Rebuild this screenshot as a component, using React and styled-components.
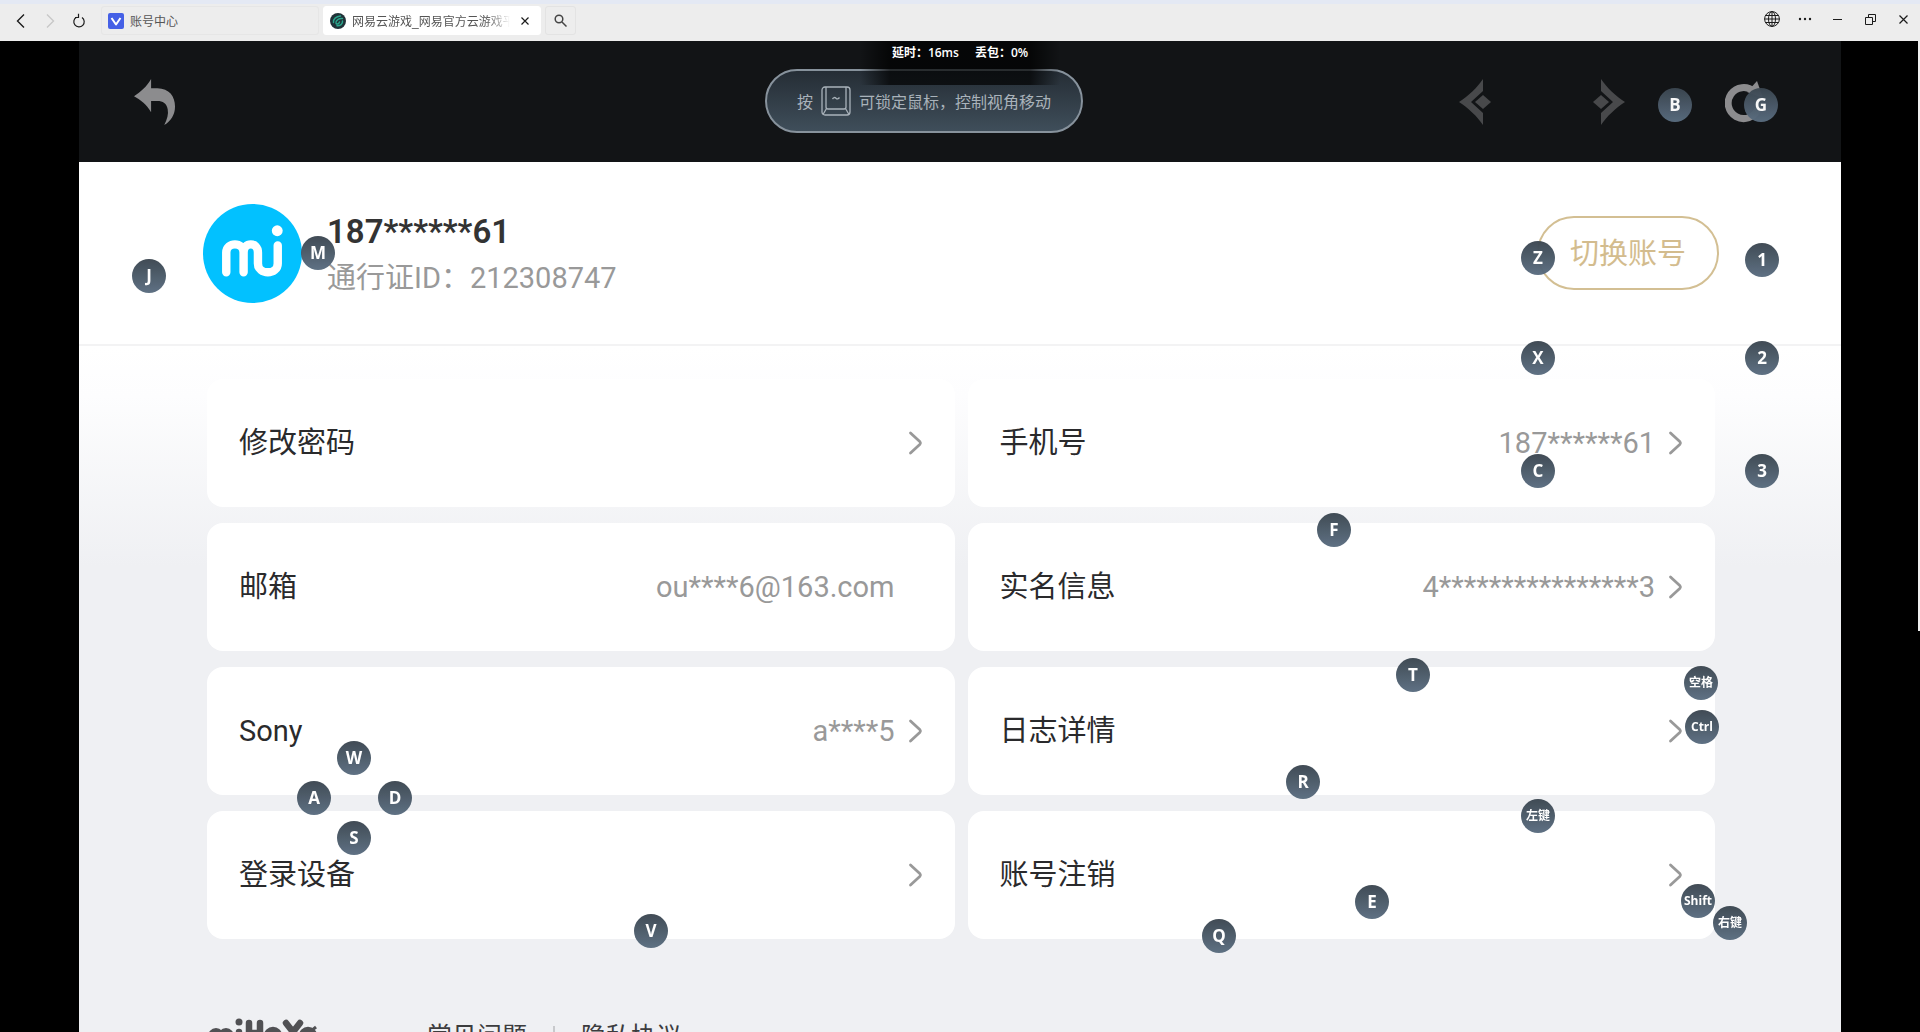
import React from "react";
import styled, { createGlobalStyle } from "styled-components";

const GlobalStyle = createGlobalStyle`
  * {
    box-sizing: border-box;
  }
  body {
    margin: 0;
    background: #000;
    font-family: Roboto, "Noto Sans CJK SC", sans-serif;
  }
  button {
    font-family: inherit;
    padding: 0;
    border: none;
    background: none;
    cursor: pointer;
  }
`;

const Window = styled.div`
  position: relative;
  display: flex;
  flex-direction: column;
  height: 100vh;
  overflow: hidden;
`;

/* Browser chrome */
const TitleBar = styled.header`
  display: flex;
  align-items: center;
  flex: none;
  height: 41px;
  padding: 0 0 4px 9px;
  background: #ededed;
  border-top: 4px solid #e4e9f4;
`;
const NavButtons = styled.nav`
  display: flex;
  gap: 6px;
  margin-right: 11px;
`;
const ChromeButton = styled.button`
  display: flex;
  align-items: center;
  justify-content: center;
  width: ${(props) => props.$width || 23}px;
  height: 24px;
  color: ${(props) => (props.$muted ? "#c8c8c8" : "#1c1c1c")};
`;
const Tab = styled.div`
  display: flex;
  align-items: center;
  width: 218px;
  height: 29px;
  margin-right: 4px;
  padding: 0 6px;
  gap: 6px;
  border: 1px solid ${(props) => (props.$active ? "#fff" : "#e6e6e6")};
  border-radius: 3px;
  background: ${(props) => (props.$active ? "#fff" : "#ededed")};
`;
const TabTitle = styled.span`
  flex: 1;
  overflow: hidden;
  white-space: nowrap;
  font-family: "Liberation Sans", "Noto Sans CJK SC", sans-serif;
  font-size: 12px;
  color: #555;
  mask-image: ${(props) => (props.$fade ? "linear-gradient(90deg, #000 85%, transparent)" : "none")};
`;
const SearchTab = styled.button`
  display: flex;
  align-items: center;
  justify-content: center;
  width: 31px;
  height: 29px;
  border: 1px solid #e3e3e3;
  border-radius: 3px;
`;
const WindowButtons = styled.div`
  display: flex;
  margin-left: auto;
  padding-bottom: 3px;
`;

/* Streamed game page */
const Stage = styled.main`
  display: flex;
  flex-direction: column;
  flex: 1;
  min-height: 0;
  margin: 0 79px;
  overflow: hidden;
  background: #eff0f3;
`;
const Toolbar = styled.div`
  display: flex;
  align-items: center;
  flex: none;
  height: 121px;
  padding: 0 76px 0 55px;
  background: #121416;
`;
const ToolbarButtons = styled.div`
  display: flex;
  align-items: center;
  margin-left: auto;
`;
const ToolbarButton = styled.button`
  display: flex;
  margin-right: ${(props) => props.$gap || 0}px;
`;
const Profile = styled.section`
  display: flex;
  align-items: center;
  flex: none;
  height: 184px;
  padding: 0 122px 0 124px;
  background: #fff;
  border-bottom: 2px solid #f3f3f4;
`;
const ProfileText = styled.div`
  display: flex;
  flex-direction: column;
  margin-left: 25px;
  padding-top: 4px;
`;
const UserName = styled.h1`
  margin: 0;
  font-size: 33px;
  line-height: 46px;
  font-weight: 600;
  color: #333;
`;
const PassportId = styled.span`
  font-size: 29px;
  line-height: 46px;
  color: #999;
`;
const SwitchButton = styled.button`
  && {
    width: 182px;
    height: 74px;
    margin-left: auto;
    padding-bottom: 4px;
    border: 2px solid #d3bf93;
    border-radius: 37px;
    font-size: 29px;
    color: #d3bc8e;
  }
`;
const Settings = styled.section`
  flex: 1;
  padding: 33px 126px 0 128px;
  background: linear-gradient(#fff 0, #fdfdfe 50px, #eff0f3 220px);
`;
const CardGrid = styled.div`
  display: grid;
  grid-template-columns: 1fr 1fr;
  gap: 16px 13px;
`;
const Card = styled.button`
  && {
    display: flex;
    align-items: center;
    height: 128px;
    padding: 0 32px;
    border-radius: 16px;
    background: #fff;
    text-align: left;
    font-size: 29px;
    line-height: 40px;
  }
`;
const CardLabel = styled.span`
  flex: 1;
  color: #2a2a2c;
`;
const CardValue = styled.span`
  margin-right: ${(props) => (props.$plain ? 28 : 13)}px;
  color: #999;
`;
const Footer = styled.footer`
  display: flex;
  align-items: flex-start;
  padding-top: 79px;
`;
const FooterLinks = styled.div`
  display: flex;
  align-items: center;
  margin-left: 109px;
`;
const FooterLink = styled.a`
  font-size: 25px;
  line-height: 38px;
  color: #3c3c3e;
  text-decoration: none;
`;
const Divider = styled.span`
  width: 2px;
  height: 22px;
  margin: 0 26px;
  background: #c8c9cc;
`;

/* Things floating over the stream */
const KeyBadge = styled.span`
  position: absolute;
  left: ${(props) => props.$x}px;
  top: ${(props) => props.$y}px;
  transform: translate(-50%, -50%);
  display: flex;
  align-items: center;
  justify-content: center;
  width: 34px;
  height: 34px;
  border-radius: 50%;
  background: linear-gradient(#3b4650, #5a6d80);
  opacity: 0.97;
  color: #fff;
  font-family: "Open Sans", "Noto Sans CJK SC", sans-serif;
  font-size: ${(props) => (props.$small ? 12 : 17)}px;
  line-height: 34px;
  font-weight: 700;
  white-space: nowrap;
`;
const LockHint = styled.div`
  position: absolute;
  left: 765px;
  top: 69px;
  display: flex;
  align-items: center;
  justify-content: center;
  gap: 8px;
  width: 318px;
  height: 64px;
  border: 2px solid #87929c;
  border-radius: 32px;
  background: linear-gradient(#252d35, #3f4e5a);
  color: #a9b2ba;
  font-size: 16px;
`;
const NetworkStatus = styled.div`
  position: absolute;
  left: 860px;
  top: 41px;
  display: flex;
  justify-content: center;
  gap: 16px;
  width: 200px;
  height: 44px;
  background: linear-gradient(90deg, transparent, rgba(0, 0, 0, 0.7) 15%, rgba(0, 0, 0, 0.7) 85%, transparent);
  color: #fff;
  font-family: "Open Sans", "Noto Sans CJK SC", sans-serif;
  font-size: 12px;
  font-weight: 600;
  line-height: 24px;
`;
const ScrollThumb = styled.div`
  position: absolute;
  right: 0;
  top: 41px;
  width: 2px;
  height: 590px;
  background: #f0f0f0;
`;

const cards = [
  { label: "修改密码" },
  { label: "手机号", value: "187******61" },
  { label: "邮箱", value: "ou****6@163.com", plain: true },
  { label: "实名信息", value: "4****************3" },
  { label: "Sony", value: "a****5" },
  { label: "日志详情" },
  { label: "登录设备" },
  { label: "账号注销" },
];

const keys = [
  { name: "B", x: 1675, y: 105 },
  { name: "G", x: 1761, y: 105 },
  { name: "J", x: 149, y: 276 },
  { name: "M", x: 318, y: 253 },
  { name: "Z", x: 1538, y: 258 },
  { name: "1", x: 1762, y: 260 },
  { name: "X", x: 1538, y: 358 },
  { name: "2", x: 1762, y: 358 },
  { name: "C", x: 1538, y: 471 },
  { name: "3", x: 1762, y: 471 },
  { name: "F", x: 1334, y: 530 },
  { name: "T", x: 1413, y: 675 },
  { name: "空格", x: 1701, y: 683, small: true },
  { name: "Ctrl", x: 1702, y: 727, small: true },
  { name: "W", x: 354, y: 758 },
  { name: "A", x: 314, y: 798 },
  { name: "D", x: 395, y: 798 },
  { name: "S", x: 354, y: 838 },
  { name: "R", x: 1303, y: 782 },
  { name: "左键", x: 1538, y: 816, small: true },
  { name: "Shift", x: 1698, y: 901, small: true },
  { name: "右键", x: 1730, y: 923, small: true },
  { name: "E", x: 1372, y: 902 },
  { name: "V", x: 651, y: 931 },
  { name: "Q", x: 1219, y: 936 },
];

const Stroke = ({ d, width = 16, height = 16, size = 1.4 }) => (
  <svg width={width} height={height} viewBox={`0 0 ${width} ${height}`} fill="none" stroke="currentColor" strokeWidth={size}>
    <path d={d} />
  </svg>
);

const Chevron = () => (
  <svg width="15" height="24" viewBox="0 0 15 24" fill="none" stroke="#999" strokeWidth="2.800" strokeLinecap="round" strokeLinejoin="round">
    <path d="M2.500 2l9.500 8.800q1 1.200 0 2.400L2.500 22" />
  </svg>
);

const PageArrow = ({ flip }) => (
  <svg width="32" height="46" viewBox="0 0 32 46">
    <g fill="#48494b" transform={flip ? "matrix(-1 0 0 1 32 0)" : undefined}>
      <path d="M24 0v12L12 23l12 11v12C18 37 9 29 0 23 9 17 18 9 24 0z" />
      <path d="M24 16l8 7-8 7-8-7z" />
    </g>
  </svg>
);

const TitleBarSection = () => (
  <TitleBar>
    <NavButtons>
      <ChromeButton aria-label="后退">
        <Stroke d="M11 1.500L4.500 8l6.500 6.500" />
      </ChromeButton>
      <ChromeButton aria-label="前进" $muted>
        <Stroke d="M5 1.500L11.500 8 5 14.500" />
      </ChromeButton>
      <ChromeButton aria-label="刷新">
        <Stroke d="M5.500 4.200A5.200 5.200 0 1 0 11 4.500M7.500.8V4.500H4" size={1.2} />
      </ChromeButton>
    </NavButtons>
    <Tab>
      <svg width="16" height="16" viewBox="0 0 16 16">
        <rect width="16" height="16" rx="2" fill="#4560e6" />
        <path d="M3.500 5L8 11.500l4.500-6.500" fill="none" stroke="#fff" strokeWidth="2" strokeLinejoin="round" />
      </svg>
      <TabTitle>账号中心</TabTitle>
    </Tab>
    <Tab $active>
      <svg width="16" height="16" viewBox="0 0 16 16">
        <circle cx="8" cy="8" r="8" fill="#203238" />
        <path d="M10.500 3C6 3.500 3 6 3.500 9.500M12.500 5.500C9 5 5.500 7.500 6 10c.5 2 3 1 3.500-1M12.500 8c.5 3-2.500 5-5.500 4.800" fill="none" stroke="#2ba58c" strokeWidth="1.500" strokeLinecap="round" />
      </svg>
      <TabTitle $fade>网易云游戏_网易官方云游戏平台</TabTitle>
      <ChromeButton aria-label="关闭标签页" $width={18}>
        <Stroke d="M1.500 1.500l7 7M8.500 1.500l-7 7" width={10} height={10} size={1.2} />
      </ChromeButton>
    </Tab>
    <SearchTab aria-label="搜索">
      <svg width="13" height="13" viewBox="0 0 13 13" fill="none" stroke="#444" strokeWidth="1.500">
        <circle cx="5" cy="5" r="3.800" />
        <path d="M8 8l4.500 4.500" />
      </svg>
    </SearchTab>
    <WindowButtons>
      <ChromeButton aria-label="语言" $width={33}>
        <svg width="16" height="16" viewBox="0 0 16 16" fill="none" stroke="currentColor">
          <circle cx="8" cy="8" r="7.400" />
          <ellipse cx="8" cy="8" rx="3.500" ry="7.400" />
          <path d="M8 .5v15M.5 8h15M1.500 4.500h13M1.500 11.500h13" />
        </svg>
      </ChromeButton>
      <ChromeButton aria-label="更多" $width={33}>
        <svg width="14" height="4" viewBox="0 0 14 4" fill="currentColor">
          <circle cx="2" cy="2" r="1.200" />
          <circle cx="7" cy="2" r="1.200" />
          <circle cx="12" cy="2" r="1.200" />
        </svg>
      </ChromeButton>
      <ChromeButton aria-label="最小化" $width={33}>
        <Stroke d="M0 5.500h9" width={9} height={11} size={1} />
      </ChromeButton>
      <ChromeButton aria-label="还原" $width={33}>
        <Stroke d="M.5 3.500h7v7h-7zM3.500 3.500v-3h7v7h-3" width={11} height={11} size={1} />
      </ChromeButton>
      <ChromeButton aria-label="关闭" $width={33}>
        <Stroke d="M.5.5l8 8M8.500.5l-8 8" width={9} height={9} size={1.2} />
      </ChromeButton>
    </WindowButtons>
  </TitleBar>
);

const Avatar = () => (
  <svg width="99" height="99" viewBox="0 0 100 100">
    <circle cx="50" cy="50" r="50" fill="#02c1ff" />
    <g fill="none" stroke="#fff" strokeWidth="8.500" strokeLinecap="round" strokeLinejoin="round">
      <path d="M23.500 69V49c0-11 17.500-11 17.500 0v20M41 49c0-11 14.500-11 14.500 0v11c0 12 20 12 20 0V42" />
    </g>
    <circle cx="75" cy="27" r="5.500" fill="#fff" />
  </svg>
);

const MihoyoLogo = () => (
  <svg width="111" height="36" viewBox="0 0 111 36" role="img" aria-label="miHoYo">
    <g fill="none" stroke="#515154" strokeWidth="6.500" strokeLinecap="round">
      <path d="M4 25v-5c0-9 10-9 10 0v5M14 20c0-9 10-9 10 0v5M32 14v12M42 5v21M53 5v21M42 15h11M79 5l7 9 7-9M86 14v12" />
      <circle cx="66" cy="18" r="6" />
      <circle cx="101" cy="18" r="6" />
    </g>
    <path d="M104 13l5-4" stroke="#515154" strokeWidth="3" />
    <circle cx="32" cy="4" r="3.500" fill="#515154" />
  </svg>
);

const App = () => {
  return (
    <>
      <GlobalStyle />
      <Window>
        <TitleBarSection />
        <Stage>
          <Toolbar>
            <ToolbarButton aria-label="返回">
              <svg width="42" height="46" viewBox="0 0 43 47">
                <path d="M0 17.500C7 13 13 8 17.500 0v9.500H24C36 9.500 42 18 42 28c0 8-4 15-11 19 3-6 4.500-11 3.500-16-1-6-5-8.500-10.500-8.500h-6.500V34C13 26 7 21.500 0 17.500z" fill="#8c8c8e" />
              </svg>
            </ToolbarButton>
            <ToolbarButtons>
              <ToolbarButton aria-label="上一页" $gap={102}>
                <PageArrow />
              </ToolbarButton>
              <ToolbarButton aria-label="下一页" $gap={100}>
                <PageArrow flip />
              </ToolbarButton>
              <ToolbarButton aria-label="刷新页面">
                <svg width="40" height="42" viewBox="0 0 40 42">
                  <path d="M33 28A15.500 15.500 0 1 1 29 10.500" fill="none" stroke="#8c8c8e" strokeWidth="7" />
                  <path d="M32 0l6 17-16-6z" fill="#8c8c8e" />
                </svg>
              </ToolbarButton>
            </ToolbarButtons>
          </Toolbar>
          <Profile>
            <Avatar />
            <ProfileText>
              <UserName>187******61</UserName>
              <PassportId>通行证ID：212308747</PassportId>
            </ProfileText>
            <SwitchButton>切换账号</SwitchButton>
          </Profile>
          <Settings>
            <CardGrid>
              {cards.map((card) => (
                <Card key={card.label}>
                  <CardLabel>{card.label}</CardLabel>
                  {card.value && <CardValue $plain={card.plain}>{card.value}</CardValue>}
                  {!card.plain && <Chevron />}
                </Card>
              ))}
            </CardGrid>
            <Footer>
              <MihoyoLogo />
              <FooterLinks>
                <FooterLink href="#faq">常见问题</FooterLink>
                <Divider />
                <FooterLink href="#privacy">隐私协议</FooterLink>
              </FooterLinks>
            </Footer>
          </Settings>
        </Stage>

        <LockHint>
          按
          <svg width="30" height="30" viewBox="0 0 30 30" fill="none" stroke="#a9b2ba" strokeWidth="1.300">
            <rect x="1" y="1" width="28" height="28" rx="3" />
            <path d="M5 1v20q0 2 2 2h16q2 0 2-2V1M5.500 22.500L2 28.500M24.500 22.500l3.500 6" />
            <path d="M11.500 13q1.800-2.500 3.500-.8t3.500-.7" />
          </svg>
          可锁定鼠标，控制视角移动
        </LockHint>
        <NetworkStatus>
          <span>延时：16ms</span>
          <span>丢包：0%</span>
        </NetworkStatus>
        {keys.map((key) => (
          <KeyBadge key={key.name} $x={key.x} $y={key.y} $small={key.small}>
            {key.name}
          </KeyBadge>
        ))}
        <ScrollThumb />
      </Window>
    </>
  );
};

export default App;
